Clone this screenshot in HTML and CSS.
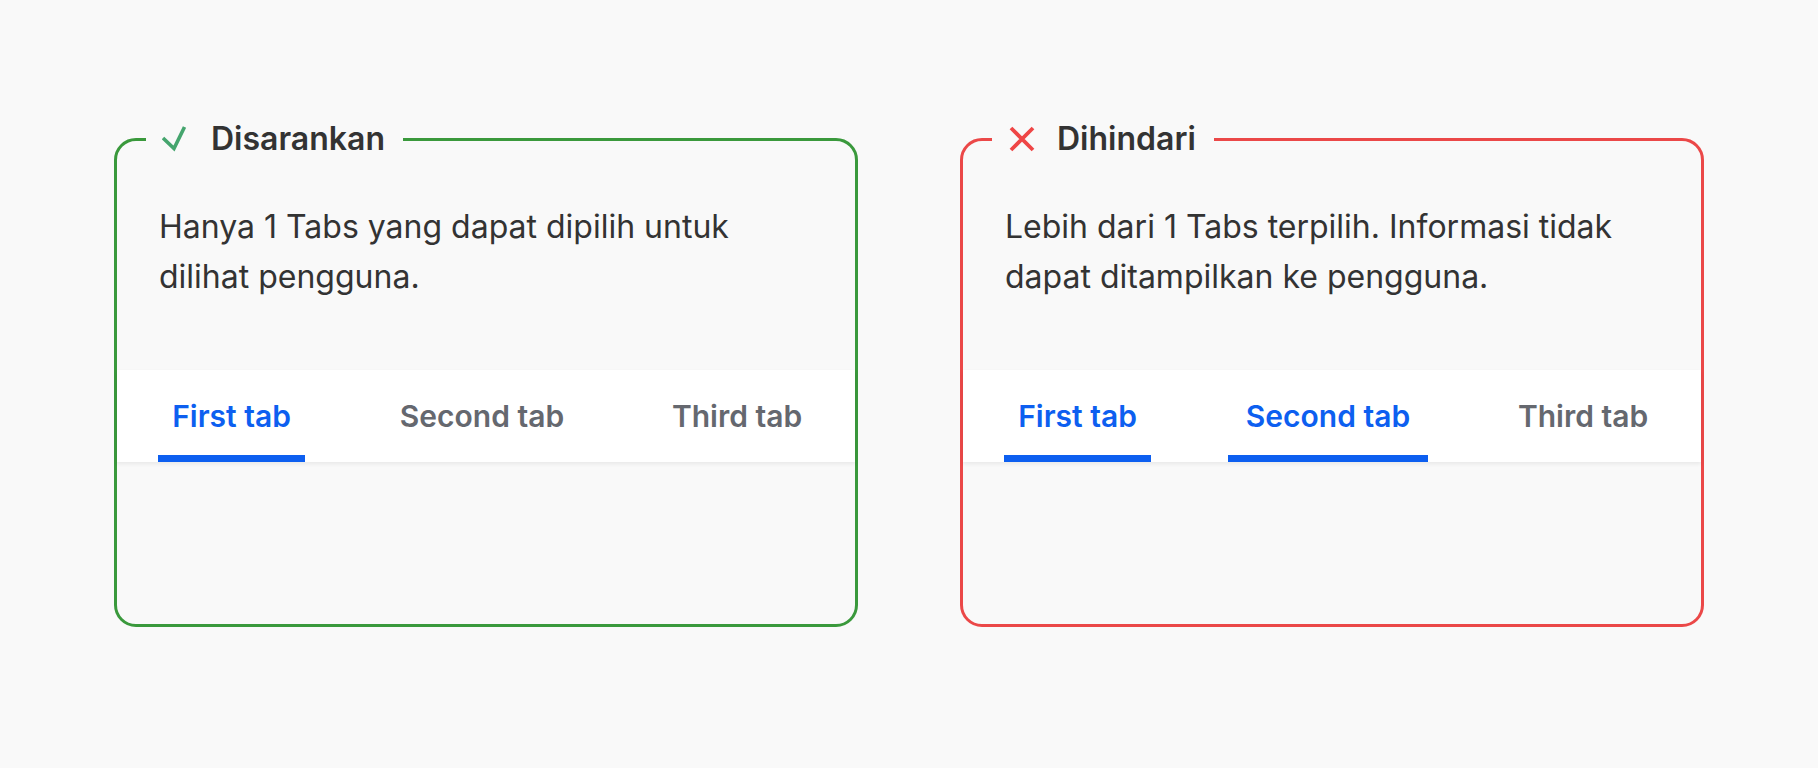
FILE: index.html
```html
<!DOCTYPE html>
<html lang="id">
<head>
<meta charset="utf-8">
<title>Tabs – Disarankan / Dihindari</title>
<link rel="stylesheet" href="styles.css">
</head>
<body>
<main class="page">
  <fieldset class="card card--do">
    <legend class="card__legend">
      <svg class="card__icon card__icon--do" viewBox="0 0 28 28" aria-hidden="true"><path d="M1 13 L12 23.5 L22.5 2"/></svg>
      <span>Disarankan</span>
    </legend>
    <p class="card__desc">Hanya 1 Tabs yang dapat dipilih untuk<br>dilihat pengguna.</p>
    <div class="tabs-area">
      <div class="tabs">
        <div class="tab tab--one tab--active"><span class="tab__label">First tab</span><span class="tab__bar"></span></div>
        <div class="tab tab--two"><span class="tab__label">Second tab</span><span class="tab__bar"></span></div>
        <div class="tab tab--three"><span class="tab__label">Third tab</span><span class="tab__bar"></span></div>
      </div>
    </div>
  </fieldset>

  <fieldset class="card card--dont">
    <legend class="card__legend">
      <svg class="card__icon card__icon--dont" viewBox="0 0 28 28" aria-hidden="true"><path d="M3 3 L25 25 M25 3 L3 25"/></svg>
      <span>Dihindari</span>
    </legend>
    <p class="card__desc">Lebih dari 1 Tabs terpilih. Informasi tidak<br>dapat ditampilkan ke pengguna.</p>
    <div class="tabs-area">
      <div class="tabs">
        <div class="tab tab--one tab--active"><span class="tab__label">First tab</span><span class="tab__bar"></span></div>
        <div class="tab tab--two tab--active"><span class="tab__label">Second tab</span><span class="tab__bar"></span></div>
        <div class="tab tab--three"><span class="tab__label">Third tab</span><span class="tab__bar"></span></div>
      </div>
    </div>
  </fieldset>
</main>
</body>
</html>
```

FILE: styles.css
```css
* {
  box-sizing: border-box;
}

html,
body {
  margin: 0;
  background: #f9f9f9;
}

body {
  font-family: Inter, "Noto Sans", "Liberation Sans", sans-serif;
  color: #333333;
}

.page {
  display: flex;
  gap: 102px;
  padding: 121px 114px 0;
}

.card {
  width: 744px;
  min-width: 0;
  margin: 0;
  padding: 0;
  border: 3px solid;
  border-radius: 22px;
}

.card--do {
  border-color: #3a993c;
}

.card--dont {
  border-color: #eb4848;
}

.card__legend {
  display: flex;
  align-items: center;
  gap: 21px;
  margin-left: 29px;
  padding: 0 18px 0 16px;
  height: 36px;
  font-size: 32px;
  line-height: 36px;
  font-weight: 600;
  color: #333333;
}

.card__icon {
  width: 28px;
  height: 28px;
  fill: none;
  stroke-width: 3.6;
}

.card__icon--do {
  stroke: #45a56e;
}

.card__icon--dont {
  stroke: #ef4646;
  stroke-width: 3.8;
}

.card__desc {
  margin: 0;
  padding: 45px 42px 0;
  font-size: 32px;
  line-height: 50px;
  font-weight: 400;
  color: #333333;
}

.tabs-area {
  padding-top: 68px;
  padding-bottom: 162px;
}

.tabs {
  display: flex;
  gap: 77px;
  height: 92px;
  padding-left: 41px;
  background: #ffffff;
  box-shadow: 0 2px 4px rgba(0, 0, 0, 0.07);
}

.tab {
  display: flex;
  flex-direction: column;
  align-items: center;
  padding-top: 28px;
}

.tab--one {
  width: 147px;
}

.tab--two {
  width: 200px;
}

.tab--three {
  width: 156px;
}

.tab__label {
  font-size: 30px;
  line-height: 36px;
  font-weight: 600;
  color: #65686f;
  white-space: nowrap;
}

.tab__bar {
  margin-top: auto;
  align-self: stretch;
  height: 7px;
}

.tab--active .tab__label {
  color: #0d5ff0;
}

.tab--active .tab__bar {
  background: #0d5ff0;
}
```
